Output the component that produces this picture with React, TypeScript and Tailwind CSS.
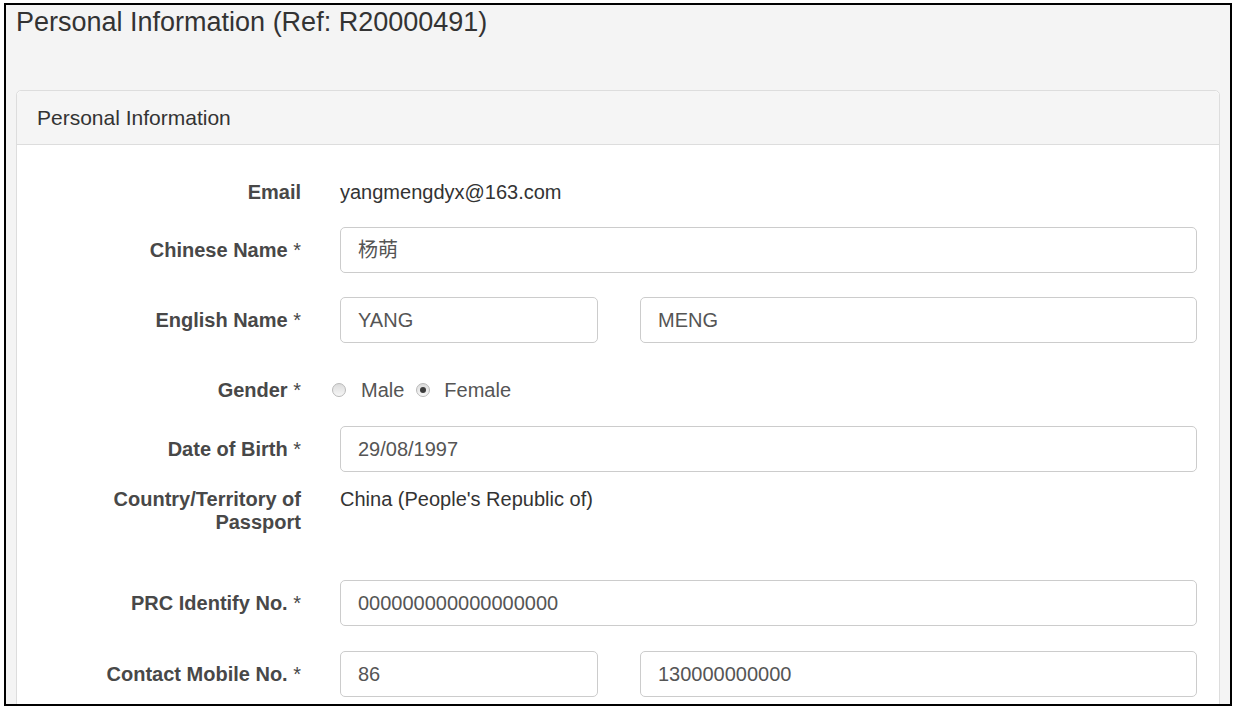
import React from 'react';

const Radio: React.FC<{ checked?: boolean }> = ({ checked }) => (
    <span className="inline-flex h-[14px] w-[14px] shrink-0 items-center justify-center rounded-full border border-[#b9b9b9] bg-gradient-to-b from-[#dcdcdc] to-[#f7f7f7]">
        {checked && <span className="h-[6px] w-[6px] rounded-full bg-[#3c3c3c]" />}
    </span>
);

const Input: React.FC<{ value: string; className?: string }> = ({ value, className = '' }) => (
    <div className={`flex h-[46px] items-center rounded-[5px] border border-[#cccccc] bg-white px-[17px] text-[#555555] ${className}`}>
        {value}
    </div>
);

const Row: React.FC<{ label: string; required?: boolean; className?: string; top?: boolean; children: React.ReactNode }> = ({
    label,
    required,
    className = '',
    top,
    children,
}) => (
    <div className={`flex ${top ? 'items-start' : 'items-center'} ${className}`}>
        <div className="ml-[44px] w-[240px] shrink-0 text-right font-bold text-[#484848]">
            {label}
            {required && <span className="font-normal"> *</span>}
        </div>
        <div className="ml-[39px] flex-1">{children}</div>
    </div>
);

const App: React.FC = () => {
    return (
        <div
            className="h-[716px] w-[1238px] overflow-hidden bg-white pl-[4px] pt-[3px]"
            style={{ fontFamily: '"Liberation Sans", Arial, "Noto Sans CJK SC", sans-serif' }}
        >
            <div className="h-[703px] w-[1228px] overflow-hidden border-2 border-black bg-[#f4f4f4] px-[10px]">
                {/* Page title */}
                <h1 className="pt-[2px] text-[27px] leading-[31px] text-[#333333]">
                    Personal Information (Ref: R20000491)
                </h1>

                {/* Panel */}
                <div className="mt-[52px] rounded-t-[5px] border border-[#dddddd] bg-white">
                    <div className="flex h-[54px] items-center rounded-t-[5px] border-b border-[#dddddd] bg-[#f5f5f5] px-[20px] text-[21px] text-[#333333]">
                        Personal Information
                    </div>

                    <div className="pb-[40px] pr-[22px] text-[20px] text-[#333333]">
                        <Row label="Email" className="mt-[24px] h-[46px]">
                            <div>yangmengdyx@163.com</div>
                        </Row>

                        <Row label="Chinese Name" required className="mt-[12px]">
                            <Input value="杨萌" />
                        </Row>

                        <Row label="English Name" required className="mt-[24px]">
                            <div className="flex">
                                <Input value="YANG" className="w-[258px]" />
                                <Input value="MENG" className="ml-[42px] flex-1" />
                            </div>
                        </Row>

                        <Row label="Gender" required className="mt-[24px] h-[46px]">
                            <div className="-ml-[8px] flex items-center text-[#555555]">
                                <Radio />
                                <span className="ml-[15px]">Male</span>
                                <span className="ml-[12px] flex items-center">
                                    <Radio checked />
                                </span>
                                <span className="ml-[14px]">Female</span>
                            </div>
                        </Row>

                        <Row label="Date of Birth" required className="mt-[13px]">
                            <Input value="29/08/1997" />
                        </Row>

                        <Row label="Country/Territory of Passport" top className="mt-[16px] leading-[23px]">
                            <div>China (People's Republic of)</div>
                        </Row>

                        <Row label="PRC Identify No." required className="mt-[46px]">
                            <Input value="000000000000000000" />
                        </Row>

                        <Row label="Contact Mobile No." required className="mt-[25px]">
                            <div className="flex">
                                <Input value="86" className="w-[258px]" />
                                <Input value="130000000000" className="ml-[42px] flex-1" />
                            </div>
                        </Row>
                    </div>
                </div>
            </div>
        </div>
    );
};

export default App;
